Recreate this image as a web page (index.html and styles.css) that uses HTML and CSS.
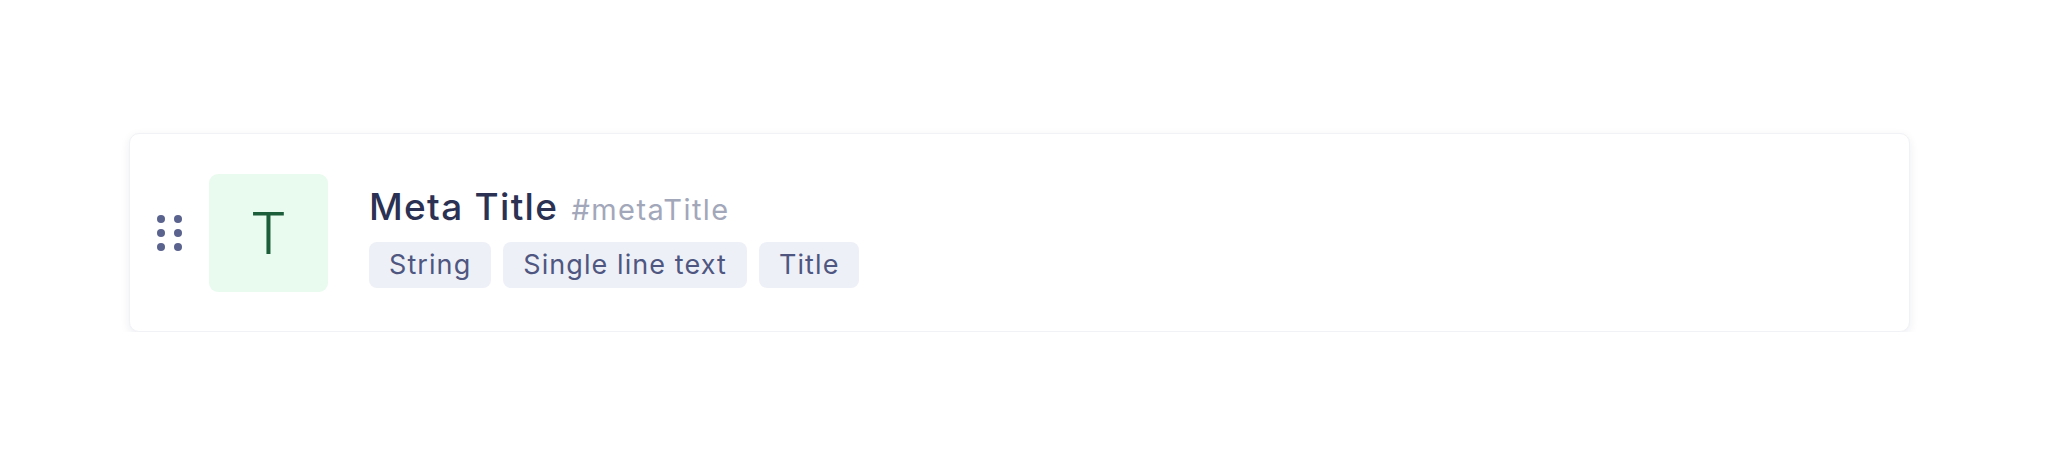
FILE: index.html
```html
<!DOCTYPE html>
<html lang="en">
<head>
    <meta charset="UTF-8">
    <title>Field</title>
    <link rel="stylesheet" href="styles.css">
</head>
<body>
    <div class="field-card">
        <span class="drag-handle">
            <svg width="26" height="36" viewBox="0 0 26 36">
                <circle cx="4" cy="4" r="4"/><circle cx="21" cy="4" r="4"/>
                <circle cx="4" cy="18" r="4"/><circle cx="21" cy="18" r="4"/>
                <circle cx="4" cy="32" r="4"/><circle cx="21" cy="32" r="4"/>
            </svg>
        </span>
        <div class="field-icon">T</div>
        <div class="field-info">
            <div class="field-title">Meta Title <span class="field-key">#metaTitle</span></div>
            <div class="field-tags">
                <span class="tag">String</span>
                <span class="tag">Single line text</span>
                <span class="tag">Title</span>
            </div>
        </div>
    </div>
</body>
</html>
```

FILE: styles.css
```css
body { margin: 0; background: #fff; font-family: Inter, "Noto Sans", sans-serif; }
.field-card { display: flex; align-items: center; margin: 133px 138px 0 129px; height: 199px; box-sizing: border-box; padding: 0 0 0 27px; background: #fff; border: 1px solid #f1f2f6; border-radius: 10px; box-shadow: 0 3px 10px rgba(30, 40, 90, 0.08); }
.drag-handle { display: flex; fill: #5a628e; margin-right: 26px; }
.field-icon { width: 119px; height: 118px; display: flex; align-items: center; justify-content: center; background: #e9fbee; border-radius: 9px; color: #1c5e3a; font-size: 58px; font-weight: 300; margin-right: 41px; }
.field-info { display: flex; flex-direction: column; gap: 12px; padding-top: 8px; }
.field-title { font-size: 37px; line-height: 1.2; font-weight: 500; color: #2b3153; letter-spacing: 0.035em; }
.field-key { font-size: 29px; font-weight: 400; color: #a3a7ba; letter-spacing: 0.05em; margin-left: 2px; }
.field-tags { display: flex; gap: 12px; }
.tag { background: #eef0f7; color: #4f5781; font-size: 27px; line-height: 30px; padding: 8px 20px; border-radius: 8px; letter-spacing: 0.04em; }
```
